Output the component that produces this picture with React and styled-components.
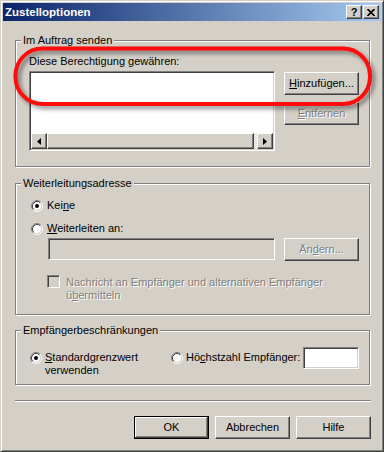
import React from "react";
import styled, { createGlobalStyle, css } from "styled-components";

const face = "#d4d0c8";

const GlobalStyle = createGlobalStyle`
  html, body {
    margin: 0;
    padding: 0;
    background: ${face};
  }
  body {
    font-family: "Liberation Sans", Arial, sans-serif;
    font-size: 11px;
    line-height: 13px;
    color: #000;
  }
  * {
    box-sizing: border-box;
  }
`;

const raised = css`
  border: 1px solid;
  border-color: #fff #404040 #404040 #fff;
  box-shadow: inset -1px -1px 0 #808080, inset 1px 1px 0 ${face};
  background: ${face};
`;

const sunken = css`
  border: 1px solid;
  border-color: #808080 #fff #fff #808080;
  box-shadow: inset 1px 1px 0 #404040, inset -1px -1px 0 ${face};
`;

const disabledText = css`
  color: #808080;
  text-shadow: 1px 1px 0 #fff;
`;

const ScWindow = styled.div`
  position: relative;
  width: 384px;
  height: 452px;
  background: ${face};
  border: 1px solid;
  border-color: ${face} #404040 #404040 ${face};
  box-shadow: inset 1px 1px 0 #fff, inset -1px -1px 0 #808080;
  padding: 2px;
  display: flex;
  flex-direction: column;
`;

const ScTitleBar = styled.div`
  height: 18px;
  flex: none;
  display: flex;
  align-items: center;
  gap: 1px;
  padding: 0 2px 0 2px;
  background: linear-gradient(to right, #0a246a, #a6caf0);

  .tbText {
    flex: 1;
    color: #fff;
    font-weight: bold;
    font-size: 11.5px;
  }
`;

const ScCaptionButton = styled.div`
  ${raised};
  width: 16px;
  height: 14px;
  display: flex;
  align-items: center;
  justify-content: center;
  font-weight: bold;
  font-size: 11px;
  line-height: 11px;
`;

const ScClient = styled.div`
  flex: 1;
  display: flex;
  flex-direction: column;
  padding: 0 10px 0 12px;
`;

const ScGroup = styled.fieldset`
  margin: ${(p) => p.$top}px 0 0 0;
  padding: 0;
  width: 355px;
  min-width: 0;
  border: 1px solid #808080;
  box-shadow: 1px 1px 0 #fff, inset 1px 1px 0 #fff;
`;

const ScLegend = styled.legend`
  margin-left: 5px;
  padding: 0 2px;
  line-height: 13px;
  background: ${face};
`;

const ScBody = styled.div`
  padding: ${(p) => p.$pad};
  display: flex;
  flex-direction: column;
`;

const ScRow = styled.div`
  display: flex;
  flex-direction: ${(p) => (p.$column ? "column" : "row")};
  align-items: flex-start;
  gap: ${(p) => p.$gap || 0}px;
  margin-top: ${(p) => p.$top || 0}px;
  margin-left: ${(p) => p.$left || 0}px;
`;

const ScListBox = styled.div`
  ${sunken};
  width: 246px;
  height: 80px;
  padding: 1px;
  background: #fff;
  display: flex;
  flex-direction: column;

  .lbItems {
    flex: 1;
  }
`;

const ScHScroll = styled.div`
  height: 16px;
  display: flex;

  .hsThumb {
    ${raised};
    flex: 1;
  }
  .hsTrack {
    width: 3px;
    background: repeating-conic-gradient(#fff 0 25%, ${face} 0 50%) 0 0 / 2px 2px;
  }
`;

const ScArrow = styled.div`
  ${raised};
  width: 16px;
  height: 16px;
  display: flex;
  align-items: center;
  justify-content: center;
`;

const ScButton = styled.div`
  width: 75px;
  height: 23px;
  flex: none;
  display: flex;
  align-items: center;
  justify-content: center;
  background: ${face};
  ${(p) =>
    p.$default
      ? css`
          border: 1px solid #000;
          box-shadow: inset -1px -1px 0 #404040, inset 1px 1px 0 #fff,
            inset -2px -2px 0 #808080, inset 2px 2px 0 ${face};
        `
      : raised};
  ${(p) => p.$disabled && disabledText};
`;

const ScField = styled.div`
  ${sunken};
  flex: none;
  width: ${(p) => p.$w}px;
  height: 22px;
  margin-left: ${(p) => (p.$push ? "auto" : "0")};
  background: ${(p) => (p.$disabled ? face : "#fff")};
`;

const ScOption = styled.div`
  display: flex;
  align-items: flex-start;
  flex: none;
  width: ${(p) => (p.$w ? `${p.$w}px` : "auto")};
  margin-top: ${(p) => p.$top || 0}px;
  padding-top: ${(p) => p.$padTop || 0}px;
  white-space: ${(p) => (p.$nowrap ? "nowrap" : "normal")};
  ${(p) => p.$disabled && disabledText};

  svg {
    flex: none;
    margin-top: 1px;
    margin-right: ${(p) => p.$gap || 4}px;
  }
`;

const ScCheck = styled.div`
  ${sunken};
  flex: none;
  width: 13px;
  height: 13px;
  margin-right: 6px;
  background: ${face};
`;

const ScSeparator = styled.div`
  width: 356px;
  margin-top: 15px;
  border-top: 1px solid #808080;
  border-bottom: 1px solid #fff;
`;

const ScFooter = styled.div`
  width: 356px;
  margin-top: 14px;
  display: flex;
  justify-content: flex-end;
  gap: 6px;
`;

const ScMark = styled.svg`
  position: absolute;
  top: -1px;
  left: -1px;
  pointer-events: none;
`;

const RadioIcon = ({ checked }) => (
  <svg width="12" height="12" viewBox="0 0 12 12">
    <circle cx="6" cy="6" r="4.5" fill="#fff" />
    <path d="M2.11 9.89 A5.5 5.5 0 0 1 9.89 2.11" stroke="#808080" fill="none" />
    <path d="M9.89 2.11 A5.5 5.5 0 0 1 2.11 9.89" stroke="#fff" fill="none" />
    <path d="M2.82 9.18 A4.5 4.5 0 0 1 9.18 2.82" stroke="#404040" fill="none" />
    <path d="M9.18 2.82 A4.5 4.5 0 0 1 2.82 9.18" stroke={face} fill="none" />
    {checked && <circle cx="6" cy="6" r="2" fill="#000" />}
  </svg>
);

const Tri = ({ dir }) => (
  <svg width="4" height="7" viewBox="0 0 4 7">
    <polygon points={dir === "left" ? "4,0 4,7 0,3.5" : "0,0 0,7 4,3.5"} fill="#000" />
  </svg>
);

export default function App() {
  return (
    <>
      <GlobalStyle />
      <ScWindow>
        <ScTitleBar>
          <span className="tbText">Zustelloptionen</span>
          <ScCaptionButton>?</ScCaptionButton>
          <ScCaptionButton>
            <svg width="8" height="7" viewBox="0 0 8 7">
              <path d="M0.5 0 L7.5 7 M7.5 0 L0.5 7" stroke="#000" strokeWidth="1.7" />
            </svg>
          </ScCaptionButton>
        </ScTitleBar>

        <ScClient>
          <ScGroup $top={13}>
            <ScLegend>Im Auftrag senden</ScLegend>
            <ScBody $pad="8px 10px 15px 13px">
              <div>Diese Berechtigung gewähren:</div>
              <ScRow $gap={9} $top={3}>
                <ScListBox>
                  <div className="lbItems" />
                  <ScHScroll>
                    <ScArrow>
                      <Tri dir="left" />
                    </ScArrow>
                    <div className="hsThumb" />
                    <div className="hsTrack" />
                    <ScArrow>
                      <Tri dir="right" />
                    </ScArrow>
                  </ScHScroll>
                </ScListBox>
                <ScRow $column $gap={7} $top={1}>
                  <ScButton>
                    <span>
                      <u>H</u>inzufügen...
                    </span>
                  </ScButton>
                  <ScButton $disabled>
                    <span>
                      <u>E</u>ntfernen
                    </span>
                  </ScButton>
                </ScRow>
              </ScRow>
            </ScBody>
          </ScGroup>

          <ScGroup $top={10}>
            <ScLegend>Weiterleitungsadresse</ScLegend>
            <ScBody $pad="9px 10px 12px 15px">
              <ScOption>
                <RadioIcon checked />
                <span>
                  Kei<u>n</u>e
                </span>
              </ScOption>
              <ScOption $top={10}>
                <RadioIcon />
                <span>
                  <u>W</u>eiterleiten an:
                </span>
              </ScOption>
              <ScRow $gap={9} $top={3} $left={17}>
                <ScField $w={227} $disabled />
                <ScButton $disabled>
                  <span>
                    Än<u>d</u>ern...
                  </span>
                </ScButton>
              </ScRow>
              <ScRow $top={14} $left={16}>
                <ScCheck />
                <ScOption $disabled $padTop={1}>
                  <span>
                    Nachricht an Empfänger und alternativen Empfänger
                    <br />ü<u>b</u>ermitteln
                  </span>
                </ScOption>
              </ScRow>
            </ScBody>
          </ScGroup>

          <ScGroup $top={9}>
            <ScLegend>Empfängerbeschränkungen</ScLegend>
            <ScBody $pad="10px 10px 7px 14px">
              <ScRow>
                <ScOption $w={141} $top={4} $gap={3}>
                  <RadioIcon checked />
                  <span>
                    <u>S</u>tandardgrenzwert
                    <br />
                    verwenden
                  </span>
                </ScOption>
                <ScOption $top={4} $gap={3} $nowrap>
                  <RadioIcon />
                  <span>
                    Hö<u>c</u>hstzahl Empfänger:
                  </span>
                </ScOption>
                <ScField $w={56} $push />
              </ScRow>
            </ScBody>
          </ScGroup>

          <ScSeparator />

          <ScFooter>
            <ScButton $default>OK</ScButton>
            <ScButton>Abbrechen</ScButton>
            <ScButton>Hilfe</ScButton>
          </ScFooter>
        </ScClient>

        <ScMark width="384" height="452" viewBox="0 0 384 452">
          <defs>
            <filter id="markShadow" x="-10%" y="-30%" width="120%" height="160%">
              <feDropShadow dx="3" dy="3" stdDeviation="2" floodColor="#000" floodOpacity="0.45" />
            </filter>
          </defs>
          <rect
            x="15.5"
            y="48.5"
            width="354.5"
            height="55.5"
            rx="27"
            ry="27"
            fill="none"
            stroke="#ff0a0a"
            strokeWidth="4"
            filter="url(#markShadow)"
          />
        </ScMark>
      </ScWindow>
    </>
  );
}
